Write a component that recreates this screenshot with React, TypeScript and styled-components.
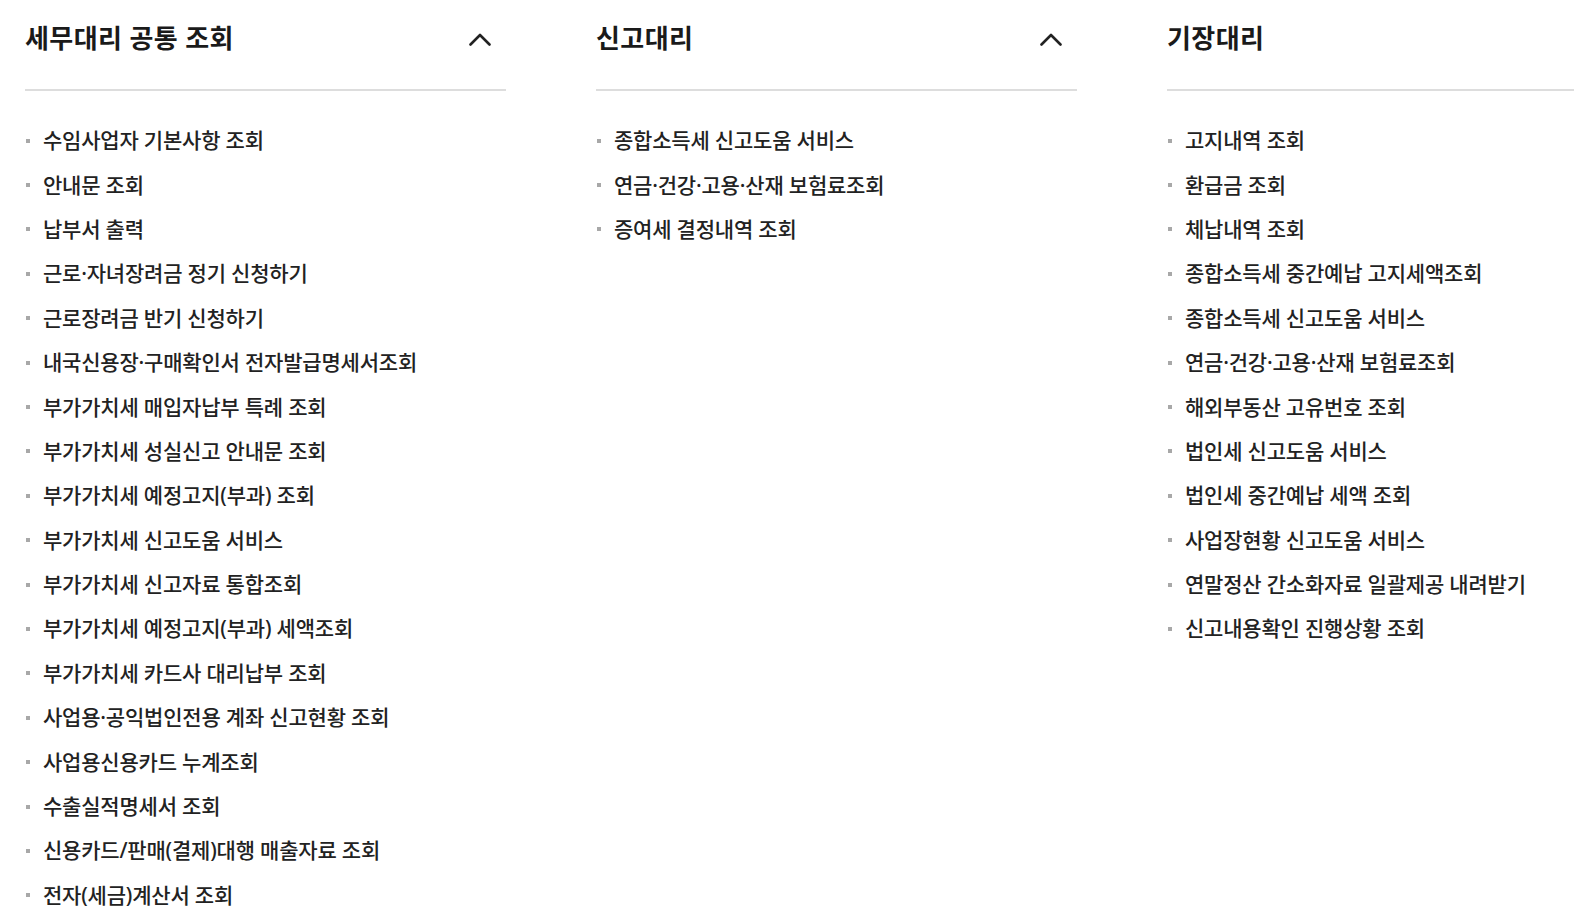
import React from "react";
import styled, { createGlobalStyle } from "styled-components";

const Global = createGlobalStyle`
  html, body {
    margin: 0;
    padding: 0;
    background: #ffffff;
    overflow: hidden;
  }
  body {
    font-family: "Noto Sans", "Noto Sans CJK KR", sans-serif;
    color: #222222;
  }
`;

const Page = styled.div`
  display: flex;
  gap: 90px;
  padding-left: 25px;
  width: max-content;
`;

const Column = styled.section`
  width: 481px;
  flex-shrink: 0;
`;

const Header = styled.div`
  height: 91px;
  box-sizing: border-box;
  padding-top: 19px;
  border-bottom: 2px solid #dddddd;
  display: flex;
  align-items: flex-start;
  justify-content: space-between;
`;

const Title = styled.h2`
  margin: 0;
  font-size: 26px;
  line-height: 38px;
  font-weight: 700;
  letter-spacing: 0.4px;
  color: #1a1a1a;
`;

const Toggle = styled.button`
  border: 0;
  background: none;
  padding: 0;
  margin: 0 15px 0 0;
  height: 40px;
  width: 22px;
  display: flex;
  align-items: center;
  justify-content: center;
  cursor: pointer;
`;

const List = styled.ul`
  list-style: none;
  margin: 0;
  padding: 26px 0 0;
`;

const Item = styled.li`
  height: 44.4px;
  display: flex;
  align-items: center;
  font-size: 21px;
  letter-spacing: -0.2px;
  font-weight: 500;
  color: #222222;
  white-space: nowrap;

  &::before {
    content: "";
    width: 4px;
    height: 4px;
    background: #a8a8a8;
    margin: 3px 13px 0 1px;
    flex-shrink: 0;
  }
`;

const Chevron = () => (
  <svg width="22" height="13" viewBox="0 0 22 13" fill="none">
    <polyline
      points="1.5,11.5 11,2 20.5,11.5"
      stroke="#222"
      strokeWidth="2.6"
      strokeLinecap="round"
      strokeLinejoin="round"
    />
  </svg>
);

type Group = { title: string; collapsible: boolean; items: string[] };

const groups: Group[] = [
  {
    title: "세무대리 공통 조회",
    collapsible: true,
    items: [
      "수임사업자 기본사항 조회",
      "안내문 조회",
      "납부서 출력",
      "근로·자녀장려금 정기 신청하기",
      "근로장려금 반기 신청하기",
      "내국신용장·구매확인서 전자발급명세서조회",
      "부가가치세 매입자납부 특례 조회",
      "부가가치세 성실신고 안내문 조회",
      "부가가치세 예정고지(부과) 조회",
      "부가가치세 신고도움 서비스",
      "부가가치세 신고자료 통합조회",
      "부가가치세 예정고지(부과) 세액조회",
      "부가가치세 카드사 대리납부 조회",
      "사업용·공익법인전용 계좌 신고현황 조회",
      "사업용신용카드 누계조회",
      "수출실적명세서 조회",
      "신용카드/판매(결제)대행 매출자료 조회",
      "전자(세금)계산서 조회",
    ],
  },
  {
    title: "신고대리",
    collapsible: true,
    items: [
      "종합소득세 신고도움 서비스",
      "연금·건강·고용·산재 보험료조회",
      "증여세 결정내역 조회",
    ],
  },
  {
    title: "기장대리",
    collapsible: true,
    items: [
      "고지내역 조회",
      "환급금 조회",
      "체납내역 조회",
      "종합소득세 중간예납 고지세액조회",
      "종합소득세 신고도움 서비스",
      "연금·건강·고용·산재 보험료조회",
      "해외부동산 고유번호 조회",
      "법인세 신고도움 서비스",
      "법인세 중간예납 세액 조회",
      "사업장현황 신고도움 서비스",
      "연말정산 간소화자료 일괄제공 내려받기",
      "신고내용확인 진행상황 조회",
    ],
  },
];

export default function App() {
  return (
    <>
      <Global />
      <Page>
        {groups.map((g) => (
          <Column key={g.title}>
            <Header>
              <Title>{g.title}</Title>
              {g.collapsible && (
                <Toggle aria-label="접기">
                  <Chevron />
                </Toggle>
              )}
            </Header>
            <List>
              {g.items.map((it) => (
                <Item key={it}>{it}</Item>
              ))}
            </List>
          </Column>
        ))}
      </Page>
    </>
  );
}
